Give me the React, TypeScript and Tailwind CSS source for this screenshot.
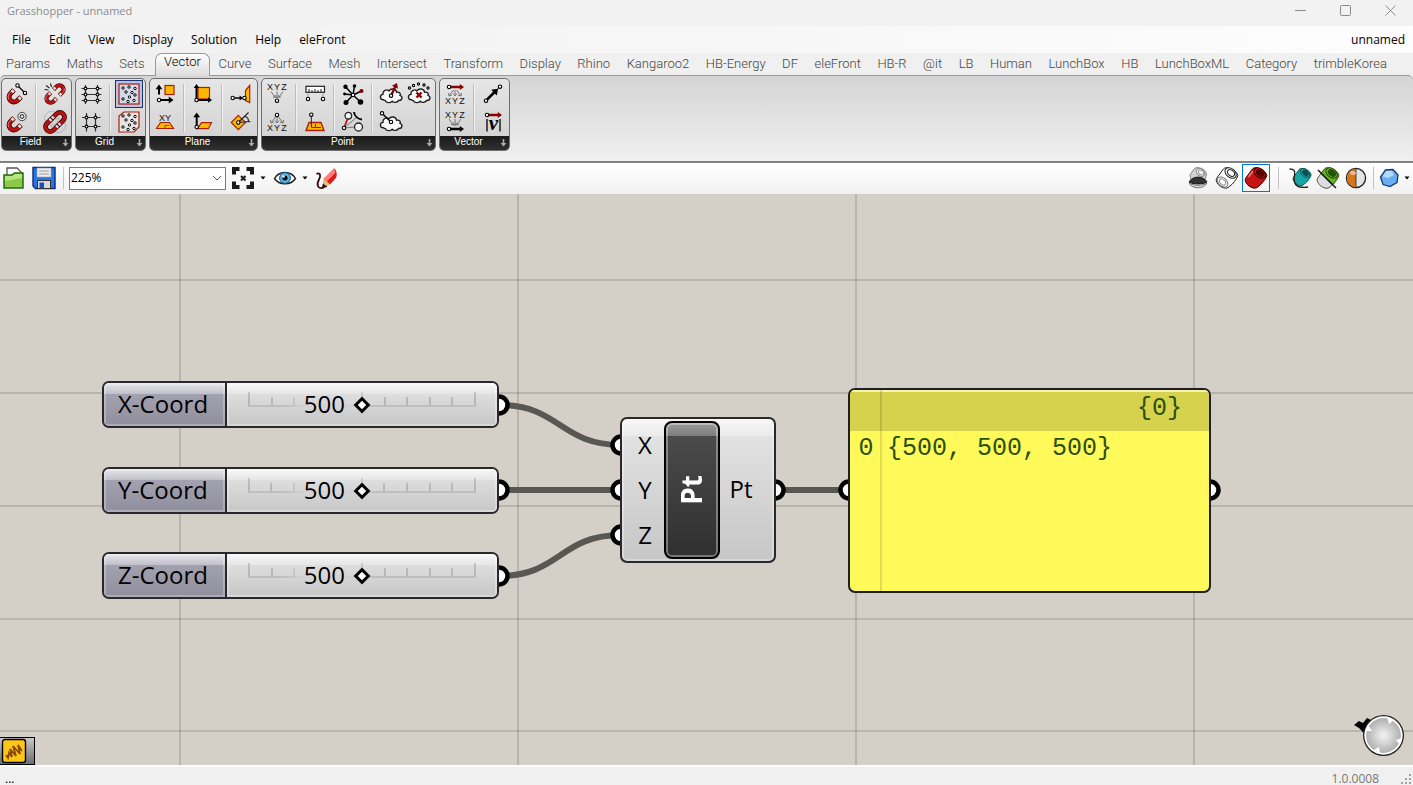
import { useState, type ReactNode } from "react";

const MENUS = ["File", "Edit", "View", "Display", "Solution", "Help", "eleFront"];

const TABS = [
  "Params",
  "Maths",
  "Sets",
  "Vector",
  "Curve",
  "Surface",
  "Mesh",
  "Intersect",
  "Transform",
  "Display",
  "Rhino",
  "Kangaroo2",
  "HB-Energy",
  "DF",
  "eleFront",
  "HB-R",
  "@it",
  "LB",
  "Human",
  "LunchBox",
  "HB",
  "LunchBoxML",
  "Category",
  "trimbleKorea",
];

const RED = "#a8200d";
const GOLD = "#ffb800";

function Icon({ size = 24, children }: { size?: number; children: ReactNode }) {
  return (
    <svg width={size} height={size} viewBox="0 0 24 24" fill="none" aria-hidden>
      {children}
    </svg>
  );
}

function Node({ x, y, r = 1.7 }: { x: number; y: number; r?: number }) {
  return <circle cx={x} cy={y} r={r} fill="#fff" stroke="#000" strokeWidth={1.1} />;
}

function Magnet({ transform }: { transform?: string }) {
  const d = "M9 8 L5.5 11.5 a4.95 4.95 0 0 0 7 7 L16 15";
  return (
    <g transform={transform}>
      <path d={d} stroke="#3c0505" strokeWidth={5} />
      <path d={d} stroke="#b81212" strokeWidth={3.4} />
      <path d="M7 8.8 L4.6 11.2 C2.8 13 2.8 15.6 3.8 17.2" stroke="#f08080" strokeWidth={0.9} />
      <path d="M8.6 8.4 L6.8 10.2 M15.6 15.4 L13.8 17.2" stroke="#e8e8e8" strokeWidth={3.2} />
    </g>
  );
}

function Arrow({
  x1,
  y1,
  x2,
  y2,
  color = "#000",
  width = 2,
  head = 3.4,
}: {
  x1: number;
  y1: number;
  x2: number;
  y2: number;
  color?: string;
  width?: number;
  head?: number;
}) {
  const angle = (Math.atan2(y2 - y1, x2 - x1) * 180) / Math.PI;
  const len = Math.hypot(x2 - x1, y2 - y1);
  return (
    <g transform={`translate(${x1} ${y1}) rotate(${angle})`}>
      <path d={`M0 0 H${len - head}`} stroke={color} strokeWidth={width} />
      <path
        d={`M${len} 0 L${len - head * 1.4} ${-head} V${head} Z`}
        fill={color}
      />
    </g>
  );
}

function Cloud() {
  return (
    <path
      d="M4.5 17.8 C0.6 17.8 0.4 12.8 4 12.4 C3.4 8.4 8 6.8 9.8 8.8 C12 5.8 17 6.6 17.6 10.2 C20.4 9.6 22 11.8 21 13.4 C24.2 14.4 23.2 19 19.6 18.4 C18.4 20.8 14.6 21 13.2 19.2 C11 21.4 7 21 6.4 18.6 C5.8 18.6 5 18.3 4.5 17.8 Z"
      fill="#fafafa"
      stroke="#222"
      strokeWidth={1.4}
    />
  );
}

function Xyz({ y }: { y: number }) {
  return (
    <g
      fill="#111"
      fontFamily="Liberation Sans, sans-serif"
      fontSize={9}
      textAnchor="middle"
    >
      <text x={5} y={y}>X</text>
      <text x={12} y={y}>Y</text>
      <text x={19} y={y}>Z</text>
    </g>
  );
}

function FanDown({ top, tip }: { top: number; tip: number }) {
  return (
    <g stroke="#777" strokeWidth={1}>
      <path d={`M6 ${top} L10.5 ${tip} M12 ${top} V${tip} M18 ${top} L13.5 ${tip}`} />
      <path d={`M10 ${tip - 3} L12 ${tip} L14 ${tip - 3} M8 ${tip - 1} H10.5 M16 ${tip - 1} H13.5`} />
    </g>
  );
}

function FanOut({ top, tip }: { top: number; tip: number }) {
  return (
    <g stroke="#777" strokeWidth={1}>
      <path d={`M10.5 ${top} L6 ${tip} M12 ${top} V${tip} M13.5 ${top} L18 ${tip}`} />
      <path d={`M5.5 ${tip - 3} L6 ${tip} L9 ${tip - 1} M10 ${tip - 2.5} L12 ${tip} L14 ${tip - 2.5} M18.5 ${tip - 3} L18 ${tip} L15 ${tip - 1}`} />
    </g>
  );
}

const DOTS = [
  [6, 6],
  [12, 5],
  [18, 6.5],
  [9, 10],
  [15, 10.5],
  [6, 17],
  [12.5, 15],
  [18, 13],
  [17, 18.5],
  [11, 19.5],
];

function Dots() {
  return (
    <>
      {DOTS.map(([x, y]) => (
        <circle key={`${x}-${y}`} cx={x} cy={y} r={1.2} fill="#fff" stroke="#000" strokeWidth={1} />
      ))}
    </>
  );
}

const fieldLine = (
  <Icon>
    <Magnet />
    <path d="M12.5 3.5 L20 11" stroke="#000" strokeWidth={1.3} />
    <Node x={12.5} y={3.5} />
    <Node x={20} y={11} />
  </Icon>
);

const fieldBreak = (
  <Icon>
    <Magnet transform="translate(0 4) scale(.84)" />
    <Magnet transform="translate(24 20) rotate(180) scale(.84)" />
    <path d="M1.5 7.5 L5.5 8 M3 3.5 L6.5 6 M7.5 1.5 L8.5 5" stroke="#222" strokeWidth={1.1} />
  </Icon>
);

const fieldSpin = (
  <Icon>
    <Magnet />
    <circle cx={17} cy={6.5} r={4.2} fill="#e4e4e4" stroke="#444" strokeWidth={1} />
    <circle cx={17} cy={6.5} r={1.9} stroke="#222" strokeWidth={1} />
  </Icon>
);

const fieldMerge = (
  <Icon>
    <circle cx={8.5} cy={8.5} r={7} stroke="#b4b4b4" strokeWidth={1} />
    <circle cx={15.5} cy={15.5} r={7} stroke="#b4b4b4" strokeWidth={1} />
    <rect
      x={0.5}
      y={7.3}
      width={23}
      height={9.4}
      rx={4.7}
      transform="rotate(-45 12 12)"
      stroke="#3c0505"
      strokeWidth={4.8}
    />
    <rect
      x={0.5}
      y={7.3}
      width={23}
      height={9.4}
      rx={4.7}
      transform="rotate(-45 12 12)"
      stroke="#b81212"
      strokeWidth={3.2}
    />
    <path
      d="M6.8 10.6 L10.6 6.8 M13.4 17.2 L17.2 13.4"
      stroke="#e8e8e8"
      strokeWidth={3}
    />
    <path d="M7.3 7.3 L10.2 10.2 M13.8 13.8 L16.8 16.8" stroke="#3c0505" strokeWidth={1.2} />
  </Icon>
);

const gridRect = (
  <Icon>
    <path d="M2.5 6.5 H22.5 M2.5 12.5 H22.5 M2.5 18.5 H22.5 M6.5 3 V22 M18.5 3 V22" stroke="#333" strokeWidth={1.2} />
    {[6.5, 12.5, 18.5].map((y) => (
      <g key={y}>
        <Node x={6.5} y={y} r={1.4} />
        <Node x={18.5} y={y} r={1.4} />
      </g>
    ))}
  </Icon>
);

const gridSquare = (
  <Icon>
    <path d="M3 7.5 H21.5 M3 16.5 H21.5 M7.5 3 V21.5 M16.5 3 V21.5" stroke="#333" strokeWidth={1.2} />
    {[7.5, 16.5].map((y) => (
      <g key={y}>
        <Node x={7.5} y={y} r={1.4} />
        <Node x={16.5} y={y} r={1.4} />
      </g>
    ))}
  </Icon>
);

const populate2d = (
  <Icon>
    <rect x={2} y={2} width={20} height={20} fill="#d4d8e8" stroke={RED} strokeWidth={1.2} />
    <Dots />
  </Icon>
);

const populate3d = (
  <Icon>
    <path d="M2 6 L7 2 H22 V17 L17 22 H2 Z" fill="#e8e4e4" stroke={RED} strokeWidth={1.2} />
    <Dots />
  </Icon>
);

const planeOffset = (
  <Icon>
    <rect x={12} y={3.5} width={9} height={9} fill={GOLD} stroke={RED} strokeWidth={1.2} />
    <Arrow x1={6} y1={12.5} x2={6} y2={2.5} />
    <Arrow x1={8} y1={18} x2={20.5} y2={18} />
    <Node x={6} y={18} />
  </Icon>
);

const planeOrigin = (
  <Icon>
    <rect x={7} y={5.5} width={11.5} height={11.5} fill={GOLD} stroke={RED} strokeWidth={1.2} />
    <Arrow x1={5.5} y1={18} x2={5.5} y2={2} head={2.8} />
    <Arrow x1={5.5} y1={18} x2={21} y2={18} head={2.8} />
    <Node x={5.5} y={18} />
  </Icon>
);

const planeNormal = (
  <Icon>
    <path d="M20.7 3.5 L16.5 8.5 V18.5 L20.7 20.5 Z" fill={GOLD} stroke={RED} strokeWidth={1.2} />
    <Arrow x1={3.7} y1={16} x2={14} y2={16} width={1.3} head={2.4} />
    <Node x={3.7} y={16} />
    <Node x={15.5} y={16} />
  </Icon>
);

const planeXy = (
  <Icon>
    <text
      x={12}
      y={10.5}
      fill="#111"
      fontFamily="Liberation Sans, sans-serif"
      fontSize={9}
      textAnchor="middle"
    >
      XY
    </text>
    <path d="M7.5 12.5 H16.5 L20.5 18.5 H3.5 Z" fill={GOLD} stroke={RED} strokeWidth={1.2} />
    <path d="M12 18 V15.5 H16" stroke={RED} strokeWidth={0.8} />
  </Icon>
);

const planeFit = (
  <Icon>
    <path d="M10.5 12.7 H20.5 L17.3 18.7 H6.5 Z" fill={GOLD} stroke={RED} strokeWidth={1.2} />
    <Arrow x1={5.7} y1={16} x2={5.7} y2={2.5} />
    <Node x={5.7} y={17} />
  </Icon>
);

const planeRotate = (
  <Icon>
    <path d="M9.3 5.3 L16.5 12.5 L9.3 19.7 L2.3 12.5 Z" fill={GOLD} stroke={RED} strokeWidth={1.2} />
    <path d="M9.3 12.5 L19.5 2.5 M9.3 12.5 L21.5 11.5 M15 6.5 C18 6.5 19.5 8.5 19.5 11.5" stroke="#222" strokeWidth={1.1} />
    <Node x={9.3} y={12.5} />
  </Icon>
);

const pointXyz = (
  <Icon>
    <Xyz y={8} />
    <FanDown top={9.5} tip={16} />
    <Node x={12} y={18.7} />
  </Icon>
);

const pointDeconstruct = (
  <Icon>
    <Node x={12} y={5} />
    <FanOut top={7} tip={13} />
    <Xyz y={21} />
  </Icon>
);

const pointDistance = (
  <Icon>
    <rect x={3} y={4.3} width={18.5} height={6} fill="#fff" stroke="#222" strokeWidth={1.2} />
    <path d="M6 10 V7 M9 10 V8 M12 10 V7 M15 10 V8 M18 10 V7" stroke="#222" />
    <path d="M5 11.5 V15 M20 11.5 V15" stroke="#999" />
    <Node x={5} y={17} />
    <Node x={20} y={17} />
  </Icon>
);

const pointProject = (
  <Icon>
    <path d="M6 12.5 H18 L21 20.5 H3 Z" fill={GOLD} stroke={RED} strokeWidth={1.4} />
    <path d="M8.3 17.5 H12.5 V14 M12.5 17.5 H18" stroke="#703000" strokeWidth={1} />
    <path d="M8.3 6 V17" stroke="#222" />
    <Node x={8.3} y={4.7} />
  </Icon>
);

const pointClosest = (
  <Icon>
    <path d="M12 13 L4.5 4.7 M12 13 L13.5 4 M12 13 L20.5 9 M12 13 L19.5 20 M12 13 L5 20.5 M12 13 L3.5 12" stroke="#000" strokeWidth={1.5} />
    <circle cx={4.5} cy={4.7} r={2.2} fill="#000" />
    <circle cx={13.5} cy={4} r={1.8} fill="#000" />
    <circle cx={20.5} cy={9} r={2} fill="#7a0000" />
    <circle cx={19.5} cy={20} r={2.8} fill="#000" />
    <circle cx={5} cy={20.5} r={2.5} fill="#000" />
    <circle cx={3.5} cy={12} r={1.4} fill="#000" />
    <Node x={12} y={13} />
  </Icon>
);

const pointPull = (
  <Icon>
    <path d="M3 18 L16 7 M3 18 L14 17" stroke="#777" strokeWidth={1} />
    <path d="M3 18 L6.5 9" stroke="#c01010" strokeWidth={1.8} />
    <circle cx={7.3} cy={5.7} r={3.3} fill="#f4f4f4" stroke="#222" strokeWidth={1.3} />
    <path d="M13 2 C13.5 6 17 9 21 9.5" stroke="#000" strokeWidth={2} />
    <circle cx={17.5} cy={17} r={4} fill="#f4f4f4" stroke="#222" strokeWidth={1.3} />
    <Node x={3} y={18} />
  </Icon>
);

const cloudArrow = (
  <Icon>
    <Cloud />
    <Arrow x1={12} y1={13.7} x2={18} y2={1} color="#8c0000" width={2.4} head={3.4} />
    <Node x={12} y={13.7} />
  </Icon>
);

const cloudCull = (
  <Icon>
    <Cloud />
    <path d="M9.5 10.5 L14.5 15.5 M14.5 10.5 L9.5 15.5" stroke="#8c0000" strokeWidth={2.4} />
    <Node x={2.5} y={6} r={1.1} />
    <Node x={6.5} y={3.5} r={1.1} />
    <Node x={11.5} y={2} r={1.1} />
    <Node x={17} y={3} r={1.1} />
    <Node x={21} y={6} r={1.1} />
  </Icon>
);

const cloudClosest = (
  <Icon>
    <Cloud />
    <path d="M3 3.3 L11.7 11.7" stroke="#000" strokeWidth={1.4} />
    <Node x={3} y={3.3} />
    <Node x={12} y={12} />
  </Icon>
);

const vectorDeconstruct = (
  <Icon>
    <Arrow x1={6} y1={5} x2={21} y2={5} color="#8c0000" width={2.4} head={3} />
    <Node x={6} y={5} />
    <FanOut top={8} tip={14} />
    <Xyz y={21.5} />
  </Icon>
);

const vectorXyz = (
  <Icon>
    <Xyz y={7.5} />
    <FanDown top={9} tip={15.5} />
    <Arrow x1={6} y1={19} x2={21} y2={19} width={2.4} head={3} />
    <Node x={6} y={19} />
  </Icon>
);

const vector2pt = (
  <Icon>
    <path d="M5 18.7 L19 4.7" stroke="#000" strokeWidth={1} />
    <Arrow x1={6} y1={17.7} x2={17} y2={6.7} width={2.6} head={4} />
    <Node x={5} y={18.7} />
    <Node x={19} y={4.7} />
  </Icon>
);

const vectorLength = (
  <Icon>
    <Arrow x1={6} y1={5} x2={21} y2={5} color="#8c0000" width={2.4} head={3} />
    <Node x={6} y={5} />
    <path d="M6 9 V21.5 M19 9 V21.5" stroke="#000" strokeWidth={1.3} />
    <text
      x={12.5}
      y={20}
      fill="#000"
      fontFamily="Liberation Serif, serif"
      fontSize={21}
      fontStyle="italic"
      fontWeight={700}
      textAnchor="middle"
    >
      v
    </text>
  </Icon>
);

type Tool = { name: string; icon: ReactNode; active?: boolean };

// every entry of `sections` is one block between two separators, read row by row
const PANELS: { name: string; sections: Tool[][][] }[] = [
  {
    name: "Field",
    sections: [
      [[{ name: "Line Charge", icon: fieldLine }], [{ name: "Spin Force", icon: fieldSpin }]],
      [[{ name: "Break Field", icon: fieldBreak }], [{ name: "Merge Fields", icon: fieldMerge }]],
    ],
  },
  {
    name: "Grid",
    sections: [
      [[{ name: "Rectangular", icon: gridRect }], [{ name: "Square", icon: gridSquare }]],
      [
        [{ name: "Populate 2D", icon: populate2d, active: true }],
        [{ name: "Populate 3D", icon: populate3d }],
      ],
    ],
  },
  {
    name: "Plane",
    sections: [
      [[{ name: "Plane Offset", icon: planeOffset }], [{ name: "XY Plane", icon: planeXy }]],
      [[{ name: "Plane Origin", icon: planeOrigin }], [{ name: "Plane Fit", icon: planeFit }]],
      [[{ name: "Plane Normal", icon: planeNormal }], [{ name: "Rotate Plane", icon: planeRotate }]],
    ],
  },
  {
    name: "Point",
    sections: [
      [
        [{ name: "Construct Point", icon: pointXyz }],
        [{ name: "Deconstruct", icon: pointDeconstruct }],
      ],
      [[{ name: "Distance", icon: pointDistance }], [{ name: "Project Point", icon: pointProject }]],
      [[{ name: "Closest Point", icon: pointClosest }], [{ name: "Pull Point", icon: pointPull }]],
      [
        [
          { name: "Point Groups", icon: cloudArrow },
          { name: "Cull Duplicates", icon: cloudCull },
        ],
        [{ name: "Closest Points", icon: cloudClosest }],
      ],
    ],
  },
  {
    name: "Vector",
    sections: [
      [
        [{ name: "Deconstruct Vector", icon: vectorDeconstruct }],
        [{ name: "Vector XYZ", icon: vectorXyz }],
      ],
      [[{ name: "Vector 2Pt", icon: vector2pt }], [{ name: "Vector Length", icon: vectorLength }]],
    ],
  },
];

function RibbonPanel({ name, sections }: { name: string; sections: Tool[][][] }) {
  return (
    <section
      aria-label={name}
      className="flex flex-col overflow-hidden rounded-[5px] border border-[#6e6e6e] bg-linear-to-b from-[#e6e6e6] to-[#cfcfcf]"
    >
      <div className="flex pt-px pr-0.5 pl-px">
        {sections.map((rows, s) => (
          <div key={s} className="flex">
            {s > 0 ? (
              <div className="mx-1 my-1 w-0.5 border-r border-l border-r-white/60 border-l-[#bdbdbd]" />
            ) : null}
            <div>
              {rows.map((row, r) => (
                <div key={r} className="flex">
                  {row.map((tool) => (
                    <button
                      key={tool.name}
                      type="button"
                      aria-label={tool.name}
                      className={
                        tool.active
                          ? "flex size-7 items-center justify-center border border-[#1c2f6e] bg-[#b9c3df]"
                          : "flex size-7 items-center justify-center"
                      }
                    >
                      {tool.icon}
                    </button>
                  ))}
                </div>
              ))}
            </div>
          </div>
        ))}
      </div>
      <div className="flex h-[14px] items-center bg-linear-to-b from-[#1a1a1a] to-[#303030] font-['Liberation_Sans',sans-serif] text-[10px] leading-[10px] text-white">
        <span className="flex-1 pb-0.5 text-center">{name}</span>
        <svg width="12" height="12" viewBox="0 0 12 12" aria-hidden>
          <path d="M6.5 2 V8" stroke="#aaa" strokeWidth="1.6" />
          <path d="M3.5 6 H9.5 L6.5 9.5 Z" fill="#aaa" />
        </svg>
      </div>
    </section>
  );
}

function Caret() {
  return (
    <svg width="12" height="4" viewBox="0 0 12 4" aria-hidden>
      <path d="M3.5 0.5 H8.5 L6 3.5 Z" fill="#000" />
    </svg>
  );
}

function ToolButton({
  label,
  active,
  children,
}: {
  label: string;
  active?: boolean;
  children: ReactNode;
}) {
  return (
    <button
      type="button"
      aria-label={label}
      className={
        active
          ? "flex size-7 items-center justify-center border border-[#0078d7]"
          : "flex size-7 items-center justify-center"
      }
    >
      {children}
    </button>
  );
}

function Divider() {
  return <div className="mx-[3px] h-[22px] w-px bg-[#c3c3c3]" />;
}

function Cylinder({ fill, hole, stroke = "#222" }: { fill: string; hole: string; stroke?: string }) {
  return (
    <g stroke={stroke} strokeWidth={1}>
      <path
        d="M1.4 12.6 L8.4 3 C11 -0.6 22 4 22.8 9.4 C22.8 11 20 15 17.4 18 L13 21.6 C8.5 24 0 18 1.4 12.6 Z"
        fill={fill}
      />
      <ellipse cx={15.6} cy={7} rx={6.4} ry={4.4} transform="rotate(40 15.6 7)" fill={fill} />
      <ellipse cx={16} cy={7} rx={4} ry={2.7} transform="rotate(40 16 7)" fill={hole} />
    </g>
  );
}

function CanvasToolbar() {
  const [zoom, setZoom] = useState("225%");

  return (
    <div className="flex h-[31px] items-center justify-between bg-linear-to-b from-white to-[#f1f1f1] pb-px">
      <div className="flex items-center gap-0.5">
        <ToolButton label="Open">
          <Icon>
            <path d="M5 10 V2 H15 L19 6 V10" fill="#fff" stroke="#555" strokeWidth={1.3} />
            <path d="M2 9 H10 L12.5 7 H21 V22 H2 Z" fill="#8ccb4a" stroke="#1e6e12" strokeWidth={1.5} />
            <path d="M3 10 H10.5 L13 8 H20 V12 L3 15 Z" fill="#b6e67c" />
          </Icon>
        </ToolButton>
        <ToolButton label="Save">
          <Icon>
            <path d="M1 1.5 H23 V22.5 H3.5 L1 20 Z" fill="#2a74e0" stroke="#0a2a80" strokeWidth={1.4} />
            <rect x={5} y={2} width={14} height={9} fill="#eee" stroke="#8aa0c0" strokeWidth={0.6} />
            <path d="M7 5 H17 M7 8 H17" stroke="#999" />
            <rect x={5.5} y={14.5} width={13} height={8} fill="#d8d8d8" stroke="#333" strokeWidth={1} />
            <rect x={7.5} y={16.5} width={4.5} height={5.5} fill="#1850b8" />
          </Icon>
        </ToolButton>
        <Divider />
        <div className="grid items-center">
          <select
            aria-label="Zoom"
            value={zoom}
            onChange={(e) => setZoom(e.target.value)}
            className="col-start-1 row-start-1 h-[23px] w-[157px] appearance-none border border-[#7a7a7a] bg-white pl-px text-[12px] leading-4 text-black"
          >
            <option>100%</option>
            <option>150%</option>
            <option>225%</option>
          </select>
          <svg
            className="pointer-events-none col-start-1 row-start-1 mr-1 justify-self-end"
            width="10"
            height="6"
            viewBox="0 0 10 6"
            aria-hidden
          >
            <path d="M1 1 L5 5 L9 1" fill="none" stroke="#555" />
          </svg>
        </div>
        <button type="button" aria-label="Zoom extents" className="ml-[3px] flex items-center">
          <Icon>
            <path d="M3 8.5 V3 H8.5 M15.5 3 H21 V8.5 M21 15.5 V21 H15.5 M8.5 21 H3 V15.5" stroke="#1b1b1b" strokeWidth={4} />
            <path d="M10 10 L14.5 14.5 M14.5 10 L10 14.5" stroke="#1b1b1b" strokeWidth={2} />
          </Icon>
          <span className="pl-0.5">
            <Caret />
          </span>
        </button>
        <button type="button" aria-label="Named views" className="ml-0.5 flex items-center">
          <Icon>
            <path d="M1.5 12.5 C6 4.5 18 4.5 22.5 12.5 C18 19.5 6 19.5 1.5 12.5 Z" fill="#fff" stroke="#222" strokeWidth={1.4} />
            <circle cx={12} cy={12} r={5.4} fill="#57b7e8" stroke="#15507c" />
            <circle cx={12} cy={12} r={2.6} fill="#03121e" />
            <circle cx={10.6} cy={10.4} r={1.2} fill="#fff" />
          </Icon>
          <span className="pl-0.5">
            <Caret />
          </span>
        </button>
        <ToolButton label="Sketch">
          <Icon>
            <path d="M1.5 8 C5.5 6 6 10 4 13.5 C1 19 3 22.5 7 22 C9 21.6 10 20 12 20" stroke="#3a0a08" strokeWidth={1.8} />
            <path d="M19 2.5 C21.5 3.5 22.5 9 21 12 L15 18.5 L8.5 13 Z" fill="#d82018" />
            <path d="M19 2.5 L8.5 13 L11.5 16 L20.5 6.5 Z" fill="#ff8078" />
            <path d="M8.5 13 L15 18.5 L7.5 21 Z" fill="#f0b878" />
            <path d="M8 17.5 L11 20 L7 21.5 Z" fill="#111" />
          </Icon>
        </ToolButton>
      </div>

      <div className="flex items-center">
        <div className="flex gap-px pr-[5px]">
          <ToolButton label="No preview">
            <Icon>
              <path d="M4 9 L8 3 C11 -0.5 20 3 20.5 8 L19 14 H5 Z" fill="#d4d4d4" stroke="#888" />
              <ellipse cx={14.5} cy={6.5} rx={4.6} ry={3.4} transform="rotate(38 14.5 6.5)" fill="#f4f4f4" stroke="#888" />
              <ellipse cx={15} cy={6.5} rx={2.8} ry={2} transform="rotate(38 15 6.5)" fill="#fff" stroke="#999" />
              <path d="M3 16 C7 9.5 17 9.5 21 16 C17 18.6 7 18.6 3 16 Z" fill="#333" stroke="#111" />
              <path d="M3 17 C8 20 16 20 21 17 C18 23.4 6 23.4 3 17 Z" fill="#d8d8d8" stroke="#777" />
            </Icon>
          </ToolButton>
          <ToolButton label="Wireframe preview">
            <Icon>
              <Cylinder fill="#fff" hole="#fff" />
              <ellipse cx={7.6} cy={16} rx={6} ry={4.2} transform="rotate(42 7.6 16)" stroke="#777" />
              <ellipse cx={7.6} cy={16} rx={3.6} ry={2.4} transform="rotate(42 7.6 16)" stroke="#888" />
            </Icon>
          </ToolButton>
          <ToolButton label="Shaded preview" active>
            <Icon>
              <Cylinder fill="#c41414" hole="#5a0404" stroke="#400" />
              <path d="M4.5 11 L9 5" stroke="#f07070" strokeWidth={1.8} />
            </Icon>
          </ToolButton>
        </div>
        <Divider />
        <div className="flex pl-1">
          <ToolButton label="Only draw selected">
            <Icon>
              <g transform="translate(4 1) scale(.84)">
                <Cylinder fill="#18a5a5" hole="#065050" stroke="#064848" />
              </g>
              <path d="M1.5 3 C6 3 7.5 5 6.5 9 C5 15 7 20 12 21 C15 21.6 18 21.5 20 21" stroke="#222" strokeWidth={1.3} />
            </Icon>
          </ToolButton>
          <ToolButton label="Document preview">
            <Icon>
              <Cylinder fill="#62b81c" hole="#245204" stroke="#2a4a10" />
              <path d="M1.4 12.6 L5 7.6 L16 19 L13 21.6 C8.5 24 0 18 1.4 12.6 Z" fill="#ddd" stroke="#777" />
              <path d="M2 4 L20 22" stroke="#111" strokeWidth={1.4} />
            </Icon>
          </ToolButton>
          <ToolButton label="Preview quality">
            <Icon>
              <circle cx={12} cy={12} r={9.6} fill="#e4e4e4" stroke="#222" strokeWidth={1.3} />
              <path d="M12 2.8 A9.2 9.2 0 0 0 12 21.2 Z" fill="#d8741a" />
              <path d="M12 2.8 V21.2" stroke="#222" strokeWidth={0.8} />
              <ellipse cx={9} cy={7} rx={3} ry={2} fill="#fff" opacity={0.5} />
            </Icon>
          </ToolButton>
        </div>
        <Divider />
        <button type="button" aria-label="Mesh edges" className="flex items-center">
          <Icon>
            <path d="M8.5 4 L16 3.5 L21 9 L20 16.5 L13 20.5 L6 18.5 L3.5 11 Z" fill="#6aaef0" stroke="#123a78" strokeWidth={1.3} />
            <path d="M9 5 L15 4.8 L17 9 L11 12 L5.5 10.5 Z" fill="#b5dafb" />
          </Icon>
          <Caret />
        </button>
      </div>
    </div>
  );
}

function SliderNode({ id, label, className }: { id: string; label: string; className: string }) {
  const [value, setValue] = useState(500);

  return (
    <div
      className={`absolute left-[102px] flex h-[47px] w-[397px] overflow-hidden rounded-[7px] border-2 border-[#29292d] ${className}`}
    >
      <label
        htmlFor={id}
        className="flex items-center border-r-2 border-[#29292d] bg-[linear-gradient(#e6e6ec,#c2c1cb_25%,#a3a2b0_25%,#908e9d)] pr-[17px] pb-0.5 pl-[14px] text-[24px] leading-8 shadow-[inset_0_0_0_2px_rgba(255,255,255,0.25)]"
      >
        {label}
      </label>
      <div className="grid flex-1 bg-[linear-gradient(#f8f8f8,#e6e6e6_25%,#dedede_25%,#c6c6c6)] pr-[21px] pl-[21px] shadow-[inset_0_0_0_2px_rgba(255,255,255,0.3)]">
        <div className="col-start-1 row-start-1 mt-[9px] flex h-[15px] items-end justify-between border-b-2 border-black/10 [mask-image:linear-gradient(to_right,#000_16%,transparent_26%,transparent_42%,#000_54%)]">
          {Array.from({ length: 11 }, (_, i) => (
            <span
              key={i}
              className={i % 5 === 0 ? "h-[13px] w-0.5 bg-black/15" : "h-2 w-0.5 bg-black/15"}
            />
          ))}
        </div>
        <output
          htmlFor={id}
          className="col-start-1 row-start-1 mr-[131px] self-center justify-self-end pb-0.5 text-[24px] leading-8"
        >
          {value}
        </output>
        <input
          id={id}
          type="range"
          min={0}
          max={1000}
          value={value}
          onChange={(e) => setValue(Number(e.target.value))}
          className="col-start-1 row-start-1 w-full appearance-none self-center bg-transparent [&::-webkit-slider-thumb]:size-3 [&::-webkit-slider-thumb]:rotate-45 [&::-webkit-slider-thumb]:appearance-none [&::-webkit-slider-thumb]:border-3 [&::-webkit-slider-thumb]:border-black [&::-webkit-slider-thumb]:bg-white"
        />
      </div>
    </div>
  );
}

const GRIPS = [
  [499, 211],
  [499, 296],
  [499, 382],
  [621, 251],
  [621, 296],
  [621, 341],
  [775, 296],
  [849, 296],
  [1210, 296],
];

function Wires() {
  return (
    <svg className="absolute inset-0 size-full" aria-hidden>
      <g stroke="#000" strokeOpacity={0.13} strokeWidth={2}>
        {[180, 518, 856, 1194, 1532, 1870].map((x) => (
          <line key={x} x1={x} y1={0} x2={x} y2="100%" />
        ))}
        {[86, 199, 312, 425, 537, 650, 763].map((y) => (
          <line key={y} x1={0} y1={y} x2="100%" y2={y} />
        ))}
      </g>
      <g fill="none" stroke="#595751" strokeWidth={6}>
        <path d="M499 211 C560 211 560 251 621 251" />
        <path d="M499 296 H621" />
        <path d="M499 382 C560 382 560 341 621 341" />
        <path d="M775 296 H849" />
      </g>
      {GRIPS.map(([x, y]) => (
        <circle key={`${x}-${y}`} cx={x} cy={y} r={8.5} fill="#fff" stroke="#000" strokeWidth={4.5} />
      ))}
    </svg>
  );
}

function PointNode() {
  return (
    <div className="absolute top-[223px] left-[620px] flex h-[146px] w-[156px] rounded-[7px] border-2 border-[#29292d] bg-[linear-gradient(#f8f8f8,#ebebeb_12%,#e2e2e2_12%,#c6c6c6)] py-0.5 text-[24px] shadow-[inset_0_0_0_2px_rgba(255,255,255,0.3)]">
      <ul className="flex w-[42px] flex-col justify-center pb-0.5 pl-1 text-center">
        <li className="h-[45px] leading-[45px]">X</li>
        <li className="h-[45px] leading-[45px]">Y</li>
        <li className="h-[45px] leading-[45px]">Z</li>
      </ul>
      <div className="flex w-14 items-center justify-center rounded-lg border-2 border-black bg-[linear-gradient(#9b9b9b,#7c7c7c_10%,#4b4b4b_10%,#2f2f2f)] shadow-[inset_0_0_0_2px_rgba(255,255,255,0.35)]">
        <span className="rotate-180 pl-0.5 text-[28px] leading-9 font-bold text-white [writing-mode:vertical-rl]">
          Pt
        </span>
      </div>
      <span className="flex-1 self-center pr-3 pb-0.5 text-center">Pt</span>
    </div>
  );
}

function PanelNode() {
  return (
    <div className="absolute top-[194px] left-[848px] h-[205px] w-[363px] overflow-hidden rounded-[7px] border-2 border-[#1f1f22] bg-[#fffa5a]">
      <table className="h-full w-full border-collapse font-['Liberation_Mono',monospace] text-[25px] leading-8 text-[#2a4f0c]">
        <thead>
          <tr className="h-[41px] bg-[#d7d24d] shadow-[inset_0_2px_0_#f7f3ae]">
            <td className="w-[31px] border-r-2 border-black/12" />
            <th scope="col" className="pt-[3px] pr-[27px] text-right align-top font-normal">
              {"{0}"}
            </th>
          </tr>
        </thead>
        <tbody>
          <tr>
            <th scope="row" className="border-r-2 border-black/12 pt-0.5 pl-0.5 align-top font-normal">
              0
            </th>
            <td className="pt-0.5 pl-[5px] align-top">{"{500, 500, 500}"}</td>
          </tr>
        </tbody>
      </table>
    </div>
  );
}

function Compass() {
  return (
    <svg className="absolute right-2 bottom-2 h-[44px] w-[54px]" viewBox="0 0 54 44" aria-hidden>
      <defs>
        <radialGradient id="dial">
          <stop offset="0" stopColor="#f4f4f4" />
          <stop offset="1" stopColor="#b0b0b0" />
        </radialGradient>
      </defs>
      <path d="M3 12 L8 8 L12 10 L16 5 L22 8 L14 22 L10 17 L8 15 Z" fill="#000" />
      <circle cx="32.5" cy="22.5" r="20.5" fill="#222" />
      <circle cx="32.5" cy="22.5" r="19.2" fill="#fff" />
      <circle cx="32.5" cy="22.5" r="17.4" fill="url(#dial)" />
      <path d="M36 4 L43 7 L38 11 Z M51 25 L49 32 L45 27 Z M29 40 L23 37 L28 34 Z M15 18 L17 12 L21 18 Z" fill="#fff" />
    </svg>
  );
}

export default function App() {
  const [tab, setTab] = useState("Vector");

  return (
    <div className="flex min-h-screen flex-col bg-[#f0f0f0] font-['Open_Sans','Noto_Sans_CJK_KR',sans-serif] text-[12px] leading-4 text-black">
      <header className="flex h-[26px] items-start justify-between bg-[#f2f2f2]">
        <h1 className="pt-[3px] pl-[7px] text-[11px] text-[#8c8c8c]">Grasshopper - unnamed</h1>
        <div className="flex text-[#8a8a8a]">
          <button type="button" aria-label="Minimize" className="flex h-[21px] w-[45px] items-center justify-center">
            <svg width="11" height="11" viewBox="0 0 11 11" stroke="currentColor">
              <path d="M0 5.5 H11" />
            </svg>
          </button>
          <button type="button" aria-label="Maximize" className="flex h-[21px] w-[45px] items-center justify-center">
            <svg width="11" height="11" viewBox="0 0 11 11" fill="none" stroke="currentColor">
              <rect x="0.5" y="0.5" width="10" height="10" rx="1" />
            </svg>
          </button>
          <button type="button" aria-label="Close" className="flex h-[21px] w-[45px] items-center justify-center">
            <svg width="11" height="11" viewBox="0 0 11 11" stroke="currentColor">
              <path d="M0.5 0.5 L10.5 10.5 M10.5 0.5 L0.5 10.5" />
            </svg>
          </button>
        </div>
      </header>

      <div className="flex h-[27px] items-center justify-between bg-linear-to-r from-[#f0f0f0] to-[#fdfdfd] px-2">
        <nav className="flex gap-[18px] pl-1">
          {MENUS.map((m) => (
            <button key={m} type="button">
              {m}
            </button>
          ))}
        </nav>
        <span>unnamed</span>
      </div>

      {/* tab captions spread over the strip, the rest of the row stays free */}
      <div
        role="tablist"
        className="flex h-[22px] items-end justify-between pr-[18px] font-['Roboto',sans-serif] text-[13px] font-light text-[#444]"
      >
        {TABS.map((t) => (
          <button
            key={t}
            type="button"
            role="tab"
            aria-selected={t === tab}
            onClick={() => setTab(t)}
            className={
              t === tab
                ? "relative z-10 -mb-px h-[23px] rounded-t-[7px] border border-b-0 border-[#999] bg-linear-to-b from-white to-[#dcdcdc] px-2 pb-1.5 text-black"
                : "h-[22px] pr-2 pl-1.5"
            }
          >
            {t}
          </button>
        ))}
      </div>

      <main className="flex flex-1 flex-col">
        <div className="flex h-[86px] items-start gap-[3px] rounded-t-[5px] border-t border-[#999] bg-linear-to-b from-[#d4d4d4] to-[#f0f0f0] pt-0.5 pl-px">
          {PANELS.map((p) => (
            <RibbonPanel key={p.name} {...p} />
          ))}
        </div>
        <div className="border-t-2 border-[#828282]">
          <CanvasToolbar />
        </div>

        <div className="relative min-h-[420px] flex-1 overflow-hidden bg-[#d4d0c8]">
          <Wires />
          <SliderNode id="x-coord" label="X-Coord" className="top-[187px]" />
          <SliderNode id="y-coord" label="Y-Coord" className="top-[273px]" />
          <SliderNode id="z-coord" label="Z-Coord" className="top-[358px]" />
          <PointNode />
          <PanelNode />
          <Compass />
          <button
            type="button"
            aria-label="Markov suggestions"
            className="absolute bottom-0 left-0 flex h-7 w-[35px] items-center border border-l-0 border-black bg-linear-to-b from-[#c8c8c8] to-[#6e6e6e]"
          >
            <svg width="27" height="26" viewBox="0 0 27 26" aria-hidden>
              <rect x="2.5" y="1.5" width="23" height="23" rx="2.5" fill="#ffc61a" stroke="#000" strokeWidth="1.4" />
              <path d="M6 17 L8 20 L9 15 L12 19 L10 11 L16 18 L13 8 L20 16 L18 7 L22 13" fill="none" stroke="#8a4a00" strokeWidth="1.8" />
            </svg>
          </button>
        </div>
      </main>

      <footer className="flex h-5 items-end justify-between border-t-2 border-white pl-[5px] leading-3">
        <span>...</span>
        <div className="flex items-end gap-5 text-[#777]">
          <span>1.0.0008</span>
          <svg width="14" height="14" viewBox="0 0 14 14" fill="#a0a0a0" aria-hidden>
            <path d="M10 3h2v2h-2z M10 7h2v2h-2z M10 11h2v2h-2z M6 7h2v2h-2z M6 11h2v2h-2z M2 11h2v2h-2z" />
          </svg>
        </div>
      </footer>
    </div>
  );
}
